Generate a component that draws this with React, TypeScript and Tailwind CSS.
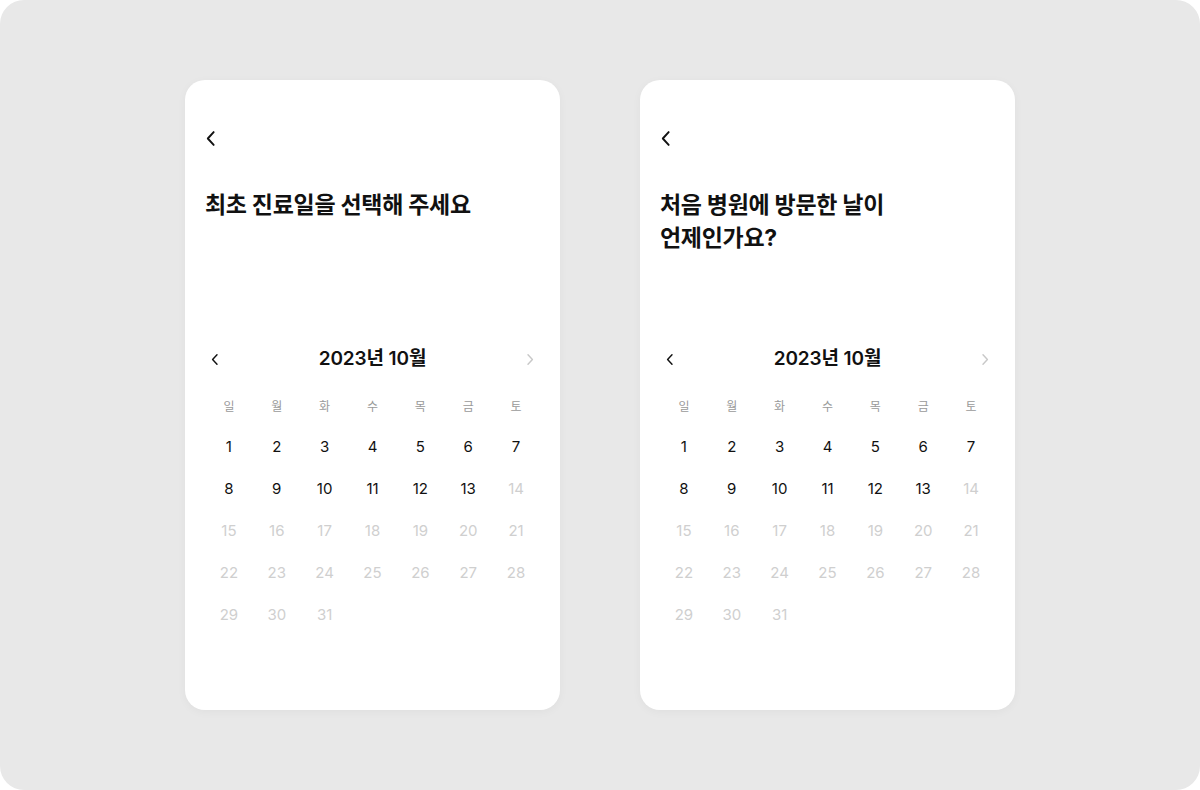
import React from "react";

// 달력 화면 두 가지 문구 시안을 나란히 보여준다.
const WEEKDAYS = ["일", "월", "화", "수", "목", "금", "토"];
const LAST_ENABLED = 13; // 오늘 이후 날짜는 선택 불가
const FONT = { fontFamily: 'Inter, "Noto Sans CJK KR", sans-serif' };

function Chevron({ dir, className }: { dir: "left" | "right"; className?: string }) {
  return (
    <svg viewBox="0 0 10 16" className={className} fill="none" stroke="currentColor" strokeWidth={1.8} strokeLinecap="round" strokeLinejoin="round">
      {dir === "left" ? <polyline points="7.5,2 2,8 7.5,14" /> : <polyline points="2.5,2 8,8 2.5,14" />}
    </svg>
  );
}

function Calendar() {
  const days = Array.from({ length: 31 }, (_, i) => i + 1);
  return (
    <div>
      <div className="flex items-center justify-between h-6">
        <button className="w-5 h-6 flex items-center justify-center text-[#111]">
          <Chevron dir="left" className="w-[8px] h-[13px]" />
        </button>
        <p className="text-[19px] font-semibold text-[#111] tracking-[-0.1px]">2023년 10월</p>
        <button className="w-5 h-6 flex items-center justify-center text-[#c8c8c8]">
          <Chevron dir="right" className="w-[8px] h-[13px]" />
        </button>
      </div>
      <div className="grid grid-cols-7 mt-[26px] h-5 items-center">
        {WEEKDAYS.map((d) => (
          <span key={d} className="text-center text-[12px] text-[#9a9a9a]">{d}</span>
        ))}
      </div>
      <div className="grid grid-cols-7 mt-[9px]">
        {days.map((d) => (
          <span key={d}
            className={`h-[42px] flex items-center justify-center text-[15px] ${d <= LAST_ENABLED ? "text-[#111]" : "text-[#cfcfcf]"}`}>
            {d}
          </span>
        ))}
      </div>
    </div>
  );
}

function DateCard({ title }: { title: React.ReactNode }) {
  return (
    <div className="w-[375px] h-[630px] bg-white rounded-[20px] shadow-[0_2px_10px_rgba(0,0,0,0.04)] px-5 pt-5">
      <button className="mt-[26px] h-6 flex items-center text-[#111]">
        <Chevron dir="left" className="w-[12px] h-[17px]" />
      </button>
      <div className="mt-[39px] h-[158px]">
        <h1 className="text-[23px] leading-[33px] font-bold text-[#111] tracking-[-0.3px]">{title}</h1>
      </div>
      <Calendar />
    </div>
  );
}

export default function App() {
  return (
    <div className="w-[1200px] h-[790px] bg-white" style={FONT}>
      <div className="w-full h-full rounded-[24px] bg-[#e8e8e8] flex justify-center items-start gap-20 pt-20">
        <DateCard title="최초 진료일을 선택해 주세요" />
        <DateCard title={<>처음 병원에 방문한 날이<br />언제인가요?</>} />
      </div>
    </div>
  );
}
